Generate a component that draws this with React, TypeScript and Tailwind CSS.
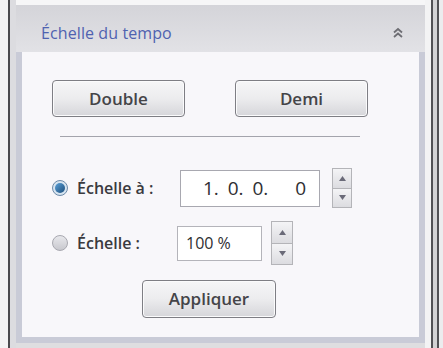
import React, { useState } from 'react';

const font = { fontFamily: '"Open Sans", "Noto Sans", "Liberation Sans", sans-serif' };

const Spinner: React.FC<{ w: string; h: string }> = ({ w, h }) => (
  <div className={`flex flex-col ${w} ${h} border border-[#b4b4b8] bg-[#e4e4e8]`}>
    <div className="flex-1 flex items-center justify-center border-b border-[#b4b4b8] bg-gradient-to-b from-[#f4f4f6] to-[#dcdce0]">
      <svg width="7" height="5" viewBox="0 0 7 5"><path d="M0 5 L3.5 0 L7 5 Z" fill="#6a6a78" /></svg>
    </div>
    <div className="flex-1 flex items-center justify-center bg-gradient-to-b from-[#f4f4f6] to-[#dcdce0]">
      <svg width="7" height="5" viewBox="0 0 7 5"><path d="M0 0 L3.5 5 L7 0 Z" fill="#6a6a78" /></svg>
    </div>
  </div>
);

const Radio: React.FC<{ checked: boolean; onClick: () => void }> = ({ checked, onClick }) => (
  <button
    onClick={onClick}
    className={`w-[16px] h-[16px] rounded-full border flex items-center justify-center ${
      checked ? 'border-[#6d8aa8] bg-[#d6e4f0]' : 'border-[#a8a8b0] bg-gradient-to-b from-[#e8e8ec] to-[#c8c8ce]'
    }`}
  >
    {checked && <span className="w-[10px] h-[10px] rounded-full bg-gradient-to-br from-[#5aa0d8] to-[#1d4f7c]" />}
  </button>
);

const WinButton: React.FC<{ label: string; className?: string }> = ({ label, className }) => (
  <button
    className={`rounded-[4px] border border-[#7e7e84] bg-gradient-to-b from-[#f6f6f7] via-[#ececee] to-[#d6d6da] shadow-[inset_0_0_0_1px_#fbfbfc] text-[17px] font-semibold text-[#444448] ${className ?? ''}`}
  >
    {label}
  </button>
);

export default function App() {
  const [mode, setMode] = useState<'a' | 'b'>('a');

  return (
    <div className="w-[443px] h-[348px] flex bg-[#f4f4f6] overflow-hidden" style={font}>
      {/* left frame */}
      <div className="w-[8px] bg-[#f3f3f4]" />
      <div className="w-[2px] bg-[#4a4a4e]" />
      <div className="w-[6px] bg-[#dcdce0]" />

      {/* panel */}
      <div className="w-[409px] flex flex-col">
        <div className="h-[5px] bg-[#f6f6f7]" />
        <div className="h-[47px] flex items-center justify-between pl-[25px] pr-[22px] pt-[8px] bg-gradient-to-b from-[#d4d4d9] to-[#e2e2e6]">
          <span className="text-[16px] text-[#4f62b0] tracking-[0.1px]">Échelle du tempo</span>
          <svg width="10" height="12" viewBox="0 0 10 12">
            <path d="M1 5.5 L5 2 L9 5.5" stroke="#6e6e74" strokeWidth="1.8" fill="none" />
            <path d="M1 10 L5 6.5 L9 10" stroke="#6e6e74" strokeWidth="1.8" fill="none" />
          </svg>
        </div>
        <div className="flex-1 flex flex-col border-x-[6px] border-b-[6px] border-[#c9cbd7] bg-[#f8f7fa]">
          <div className="flex gap-[50px] pl-[30px] mt-[28px]">
            <WinButton label="Double" className="w-[133px] h-[37px]" />
            <WinButton label="Demi" className="w-[133px] h-[37px]" />
          </div>

          <div className="ml-[38px] mt-[19px] w-[300px] h-px bg-[#a4a4ac]" />

          <div className="flex items-center pl-[30px] mt-[31px]">
            <Radio checked={mode === 'a'} onClick={() => setMode('a')} />
            <span className="w-[103px] ml-[9px] text-[16px] font-semibold text-[#3a3a3e]">Échelle à :</span>
            <div className="w-[140px] h-[37px] border border-[#a8a8b0] bg-white flex items-center justify-end pr-[13px] text-[19px] text-[#2e2e32]">
              <span className="whitespace-pre [word-spacing:4px]">1. 0. 0.   0</span>
            </div>
            <div className="ml-[12px]">
              <Spinner w="w-[20px]" h="h-[40px]" />
            </div>
          </div>

          <div className="flex items-center pl-[30px] mt-[13px]">
            <Radio checked={mode === 'b'} onClick={() => setMode('b')} />
            <span className="w-[100px] ml-[9px] text-[16px] font-semibold text-[#3a3a3e]">Échelle :</span>
            <div className="w-[85px] h-[35px] border border-[#b4b4ba] bg-white flex items-center pl-[8px] text-[16px] text-[#2e2e32]">
              100 %
            </div>
            <div className="ml-[9px]">
              <Spinner w="w-[22px]" h="h-[44px]" />
            </div>
          </div>

          <div className="ml-[120px] mt-[15px]">
            <WinButton label="Appliquer" className="w-[134px] h-[38px]" />
          </div>
        </div>
        <div className="h-[5px] bg-[#dedee0]" />
      </div>

      {/* right frame */}
      <div className="w-[6px] bg-[#f3f3f4]" />
      <div className="w-[2px] bg-[#505054]" />
      <div className="w-[4px] bg-[#d2d2d4]" />
      <div className="w-[2px] bg-[#505054]" />
      <div className="flex-1 bg-[#ececee]" />
    </div>
  );
}
